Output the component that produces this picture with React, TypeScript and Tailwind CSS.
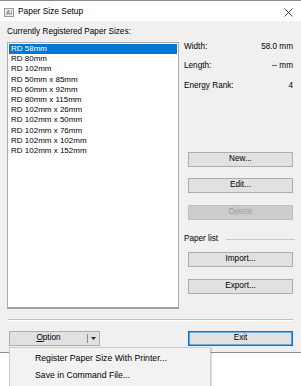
import { useState } from "react";

const sizes = [
  "RD 58mm",
  "RD 80mm",
  "RD 102mm",
  "RD 50mm x 85mm",
  "RD 60mm x 92mm",
  "RD 80mm x 115mm",
  "RD 102mm x 26mm",
  "RD 102mm x 50mm",
  "RD 102mm x 76mm",
  "RD 102mm x 102mm",
  "RD 102mm x 152mm",
];

function Btn({ label, disabled, className = "" }: { label: string; disabled?: boolean; className?: string }) {
  return (
    <div
      className={
        "h-[15px] w-[105px] ml-[4px] flex items-center justify-center border text-[8.2px] leading-none " +
        (disabled
          ? "bg-[#cccccc] border-[#bfbfbf] text-[#9d9d9d]"
          : "bg-[#e1e1e1] border-[#adadad] text-black") +
        " " +
        className
      }
    >
      {label}
    </div>
  );
}

export default function App() {
  const [selected, setSelected] = useState(0);

  return (
    <div
      className="relative w-[301px] h-[386px] bg-white overflow-hidden text-black"
      style={{ fontFamily: '"Liberation Sans", Arial, sans-serif' }}
    >
      {/* ウィンドウ本体 */}
      <div className="w-[301px] flex flex-col border-t border-b border-[#8a8a8a]">
        {/* タイトルバー */}
        <div className="h-[20px] bg-white flex items-center pl-[4px] pr-[8px]">
          <svg width="10" height="9" viewBox="0 0 10 9" className="mt-[3px]">
            <rect x="0.5" y="0.5" width="9" height="8" fill="#eeeeee" stroke="#9a9a9a" />
            <text x="2" y="7" fontSize="6.5" fill="#555" fontFamily="Liberation Sans, Arial, sans-serif">
              A
            </text>
            <line x1="7.5" y1="2" x2="7.5" y2="7" stroke="#aaaaaa" />
          </svg>
          <span className="ml-[4px] text-[8.4px] leading-none">Paper Size Setup</span>
          <svg width="9" height="9" viewBox="0 0 9 9" className="ml-auto mt-[2px]">
            <path d="M0.5 0.5 L8.5 8.5 M8.5 0.5 L0.5 8.5" stroke="#333" strokeWidth="0.9" />
          </svg>
        </div>

        {/* ダイアログ */}
        <div className="h-[331px] bg-[#f0f0f0] pt-[6px] pl-[7px] pr-[8px] flex flex-col">
          <div className="h-[10px] leading-[10px] text-[8.2px]">Currently Registered Paper Sizes:</div>

          <div className="flex mt-[5px]">
            <div className="w-[172px] h-[267px] bg-white border border-[#acacac] border-b-2 border-b-[#a0a0a0] p-[1px]">
              {sizes.map((s, i) => (
                <div
                  key={s}
                  onClick={() => setSelected(i)}
                  className={
                    "h-[10.2px] leading-[10.2px] pl-[2px] text-[8px] whitespace-nowrap " +
                    (i === selected ? "bg-[#0078d7] text-white" : "")
                  }
                >
                  {s}
                </div>
              ))}
            </div>

            <div className="w-[109px] ml-[5px] flex flex-col text-[8.2px]">
              <div className="h-[10px] leading-[10px] flex justify-between">
                <span>Width:</span>
                <span>58.0 mm</span>
              </div>
              <div className="h-[10px] leading-[10px] flex justify-between mt-[9px]">
                <span>Length:</span>
                <span>-- mm</span>
              </div>
              <div className="h-[10px] leading-[10px] flex justify-between mt-[10px]">
                <span>Energy Rank:</span>
                <span>4</span>
              </div>

              <Btn label="New..." className="mt-[61px]" />
              <Btn label="Edit..." className="mt-[11px]" />
              <Btn label="Delete" disabled className="mt-[12px]" />

              <div className="h-[10px] leading-[10px] flex items-center mt-[14px]">
                <span>Paper list</span>
                <div className="flex-1 h-px bg-[#c8c8c8] ml-[8px] mr-[-2px]" />
              </div>

              <Btn label="Import..." className="mt-[8px]" />
              <Btn label="Export..." className="mt-[12px]" />
            </div>
          </div>

          <div className="mt-[10px] ml-[1px] h-px bg-[#c0c0c0]" />
          <div className="ml-[1px] h-px bg-white" />

          <div className="flex justify-between mt-[10px] ml-[2px]">
            <div className="w-[91px] h-[15px] flex bg-[#e1e1e1] border border-[#adadad] text-[8.2px]">
              <div className="flex-1 flex items-center justify-center">
                <span>
                  <span className="underline">O</span>ption
                </span>
              </div>
              <div className="w-px my-[2px] bg-[#8a8a8a]" />
              <div className="w-[11px] flex items-center justify-center">
                <svg width="5" height="3" viewBox="0 0 5 3">
                  <path d="M0 0 H5 L2.5 3 Z" fill="#222" />
                </svg>
              </div>
            </div>
            <div className="w-[105px] h-[15px] flex items-center justify-center bg-[#e1e1e1] border border-[#0078d7] shadow-[inset_0_0_0_0.6px_#0078d7] text-[8.2px]">
              Exit
            </div>
          </div>
        </div>
      </div>

      {/* ドロップダウンメニュー */}
      <div className="absolute left-[9px] top-[347px] w-[202px] h-[42px] bg-[#f2f2f2] border border-[#cccccc] shadow-[1px_1px_1px_rgba(0,0,0,0.12)] pt-[2px] text-[8.7px]">
        <div className="h-[17px] flex items-center pl-[25px]">Register Paper Size With Printer...</div>
        <div className="h-[17px] flex items-center pl-[25px]">Save in Command File...</div>
      </div>
    </div>
  );
}
